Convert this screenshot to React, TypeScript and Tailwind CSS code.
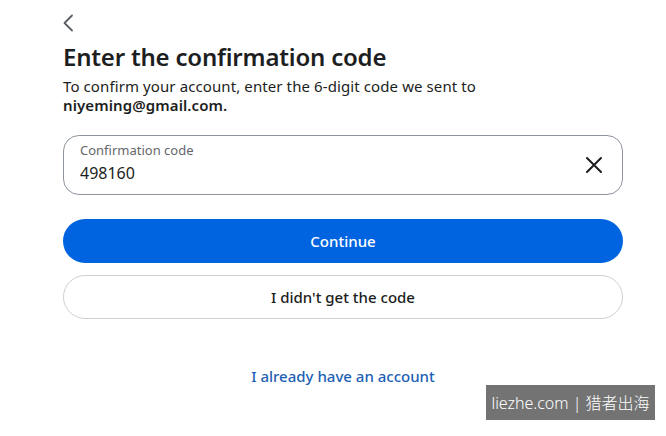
import React from "react";

export default function App() {
  return (
    <div
      className="relative w-[666px] h-[436px] bg-white overflow-hidden"
      style={{ fontFamily: '"Noto Sans", "Open Sans", sans-serif' }}
    >
      <div className="flex flex-col pl-[63px] w-[623px]">
        <div className="h-[14px]" />
        <svg width="12" height="18" viewBox="0 0 12 18" className="-ml-[1px]">
          <path d="M10 1.5 L2.5 9 L10 16.5" fill="none" stroke="#5b5e62" strokeWidth="1.8" strokeLinecap="round" strokeLinejoin="round" />
        </svg>
        <h1 className="mt-[10px] text-[24px] leading-[30px] font-semibold text-[#1c1e21] tracking-[-0.2px]">
          Enter the confirmation code
        </h1>
        <p className="mt-[5px] text-[15px] leading-[19px] tracking-[0.1px] text-[#1c1e21]">
          To confirm your account, enter the 6-digit code we sent to
          <br />
          <span className="font-semibold">niyeming@gmail.com.</span>
        </p>
        <div className="mt-[20px] h-[60px] rounded-[16px] border border-[#8d949e] flex items-start pl-[16px] pr-[18px]">
          <div className="flex-1 flex flex-col pt-[6px]">
            <span className="text-[13px] leading-[16px] text-[#65676b]">Confirmation code</span>
            <span className="mt-[5px] text-[16px] leading-[20px] text-[#1c1e21]">498160</span>
          </div>
          <svg width="20" height="20" viewBox="0 0 20 20" className="self-center">
            <path d="M3 3 L17 17 M17 3 L3 17" stroke="#1c1e21" strokeWidth="2" strokeLinecap="round" />
          </svg>
        </div>
        <button className="mt-[24px] h-[44px] rounded-full bg-[#0064e0] text-white text-[15px] font-medium">
          Continue
        </button>
        <button className="mt-[12px] h-[44px] rounded-full border border-[#ced0d4] bg-white text-[#1c1e21] text-[15px] font-medium">
          I didn't get the code
        </button>
        <div className="mt-[47px] flex justify-center">
          <span className="text-[15px] leading-[20px] font-medium text-[#1d5fb4]">I already have an account</span>
        </div>
      </div>
      <div
        className="absolute left-[486px] top-[385px] w-[169px] h-[35px] bg-[#737373] flex items-center justify-center text-white text-[16px] font-light"
        style={{ fontFamily: '"Noto Sans", "Noto Sans CJK SC", sans-serif' }}
      >
        liezhe.com | 猎者出海
      </div>
    </div>
  );
}
